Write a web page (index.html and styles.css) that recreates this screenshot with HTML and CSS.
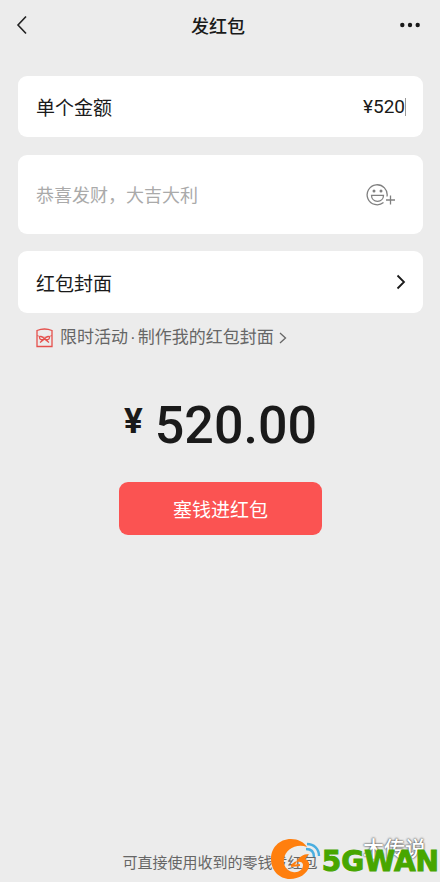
FILE: index.html
```html
<!DOCTYPE html>
<html lang="zh-CN">
<head>
<meta charset="utf-8">
<meta name="viewport" content="width=device-width, initial-scale=1">
<title>发红包</title>
<link rel="stylesheet" href="styles.css">
</head>
<body>
<div class="page">
  <header class="topbar">
    <button class="icon-button" type="button" aria-label="返回">
      <svg width="12" height="20" viewBox="0 0 12 20"><path d="M10 1.500 2 10l8 8.500" fill="none" stroke="#222" stroke-width="1.600"/></svg>
    </button>
    <h1 class="title">发红包</h1>
    <button class="icon-button more" type="button" aria-label="更多">
      <svg width="20" height="6" viewBox="0 0 20 6" fill="#1a1a1a"><circle cx="2.300" cy="3" r="2.200"/><circle cx="10" cy="3" r="2.200"/><circle cx="17.700" cy="3" r="2.200"/></svg>
    </button>
  </header>
  <main class="content">
    <form class="form">
      <div class="card">
        <label class="label" for="amount">单个金额</label>
        <input class="amount-input" id="amount" type="text" inputmode="decimal" value="¥520">
        <span class="caret"></span>
      </div>
      <div class="card card-message">
        <input class="message-input" type="text" aria-label="祝福语" placeholder="恭喜发财，大吉大利">
        <button class="icon-button" type="button" aria-label="添加表情">
          <svg width="30" height="24" viewBox="0 0 30 24" fill="none" stroke="#808080" stroke-width="1.300">
            <path d="M21 13.500A10 10 0 1 0 17.500 19.500"/>
            <path d="M5.500 12.300h12c0 3.500-2.500 6-6 6s-6-2.500-6-6z"/>
            <circle cx="8" cy="8" r="1.500" fill="#808080" stroke="none"/><circle cx="15" cy="8" r="1.500" fill="#808080" stroke="none"/>
            <path d="M24.500 12.500v9M20 17h9"/>
          </svg>
        </button>
      </div>
      <button class="card card-cover" type="button">
        <span class="label">红包封面</span>
        <svg width="10" height="16" viewBox="0 0 10 16"><path d="M1.500 1.500 8 8l-6.500 6.500" fill="none" stroke="#1a1a1a" stroke-width="1.800"/></svg>
      </button>
      <a class="promo" href="#">
        <svg width="17" height="20" viewBox="0 0 17 20" fill="none" stroke="#e5504c" stroke-width="1.300">
          <path d="M1 2.500Q8.500-.5 16 2.500V18.500H1z"/>
          <path d="M1 7.500Q8.500 11 16 7.500" stroke-width=".8"/>
          <path d="M8.500 11C6 8 3.500 7.500 3.500 9.500S6 12.500 8.500 11C11 8 13.500 7.500 13.500 9.500S11 12.500 8.500 11L4 14.500M8.500 11l4.500 3.500"/>
        </svg>
        <span class="promo-text"><span>限时活动</span><span>·</span><span>制作我的红包封面</span></span>
        <svg width="8" height="12" viewBox="0 0 8 12"><path d="M1 1l5.500 5L1 11" fill="none" stroke="#666" stroke-width="1.300"/></svg>
      </a>
      <p class="total"><span class="currency">¥</span><span>520.00</span></p>
      <button class="submit" type="submit">塞钱进红包</button>
    </form>
  </main>
  <footer class="footer">可直接使用收到的零钱发红包</footer>
  <div class="script-mark">木传说</div>
  <div class="site-mark">
    <svg width="52" height="42" viewBox="0 0 52 42">
      <path d="M37 9C34 4 28 1 21 1 9 1 1 10 1 21s8 20 19 20c9 0 17-5 19-12 1-4-1-7-4-8l4-5c-6 0-10 3-13 8 4-1 7 0 7 3 0 5-5 8-10 7-6-1-10-6-9-13C15 12 26 5 37 9z" fill="#ff7f0e"/>
      <path d="M21 28l9-1M26 24l-5 4" fill="none" stroke="#ff7f0e" stroke-width="2"/>
      <g fill="none" stroke="#4aaee0" stroke-width="2.400"><path d="M37 6c7 0 12 5 12 12"/><path d="M36 11c5 0 8 3 8 8"/></g>
    </svg>
    <span class="site-name">5GWAN</span>
  </div>
</div>
</body>
</html>
```
FILE: styles.css
```css
* {
  box-sizing: border-box;
}

body {
  margin: 0;
  background: #ececec;
  color: #1a1a1a;
  font-family: "Liberation Sans", "Noto Sans CJK SC", sans-serif;
}

button,
input {
  margin: 0;
  padding: 0;
  border: 0;
  background: none;
  color: inherit;
  font: inherit;
}

svg {
  display: block;
  flex: none;
}

.page {
  position: relative;
  display: flex;
  flex-direction: column;
  min-height: 100vh;
  overflow: hidden;
}

.topbar {
  display: grid;
  grid-template-columns: 1fr auto 1fr;
  align-items: center;
  height: 50px;
  padding: 0 20px 0 16px;
}

.more {
  justify-self: end;
}

.title {
  margin: 0;
  font-size: 18px;
  font-weight: 500;
  line-height: 24px;
  font-family: "Noto Sans CJK SC", sans-serif;
}

.content {
  flex: 1;
  padding: 26px 17px 0 18px;
}

.form {
  display: flex;
  flex-direction: column;
}

.card {
  display: flex;
  align-items: center;
  width: 100%;
  min-height: 61px;
  margin-bottom: 18px;
  padding: 0 17px 0 18px;
  border-radius: 9px;
  background: #fff;
}

.label {
  flex: 1;
  font-size: 19px;
  text-align: left;
}

.amount-input {
  width: 120px;
  font-family: Roboto, sans-serif;
  font-size: 19px;
  text-align: right;
}

.caret {
  width: 1px;
  height: 18px;
  background: #999;
}

.card-message {
  min-height: 79px;
  margin-bottom: 17px;
  padding-right: 27px;
}

.message-input {
  flex: 1;
  min-width: 0;
  height: 28px;
  padding-top: 4px;
  font-size: 18px;
}

.message-input::placeholder {
  color: #aaa;
  opacity: 1;
}

.card-cover {
  min-height: 62px;
  margin-bottom: 14px;
}

.promo {
  display: flex;
  align-items: center;
  height: 22px;
  padding-left: 18px;
  color: #666;
  text-decoration: none;
}

.promo-text {
  display: flex;
  gap: 2px;
  margin: 0 5px 0 7px;
  font-size: 17px;
  line-height: 24px;
  white-space: nowrap;
}

.total {
  display: flex;
  align-items: flex-start;
  justify-content: center;
  gap: 12px;
  margin: 45px 0 0;
  font-family: Roboto, sans-serif;
  font-size: 52px;
  font-weight: 500;
  line-height: 64px;
}

.currency {
  font-size: 35px;
  font-weight: 700;
  line-height: 56px;
}

.submit {
  align-self: center;
  width: 50%;
  height: 53px;
  margin-top: 24px;
  border-radius: 9px;
  background: #fb5352;
  color: #fff;
  font-size: 19px;
}

.footer {
  padding-bottom: 8px;
  color: #666;
  font-size: 15px;
  line-height: 22px;
  text-align: center;
}

.script-mark {
  position: absolute;
  right: 14px;
  bottom: 20px;
  color: #fff;
  font-family: "Noto Sans CJK SC", sans-serif;
  font-size: 21px;
  font-weight: 500;
  line-height: 30px;
  text-shadow: 0 0 2px #555, 0 0 2px #555;
}

.site-mark {
  position: absolute;
  right: 1px;
  bottom: 2px;
  display: flex;
  align-items: flex-end;
}

.site-name {
  color: #47a600;
  font-family: "DejaVu Sans", sans-serif;
  font-size: 28px;
  font-weight: 700;
  line-height: 36px;
  -webkit-text-stroke: 1px #47a600;
}
```
